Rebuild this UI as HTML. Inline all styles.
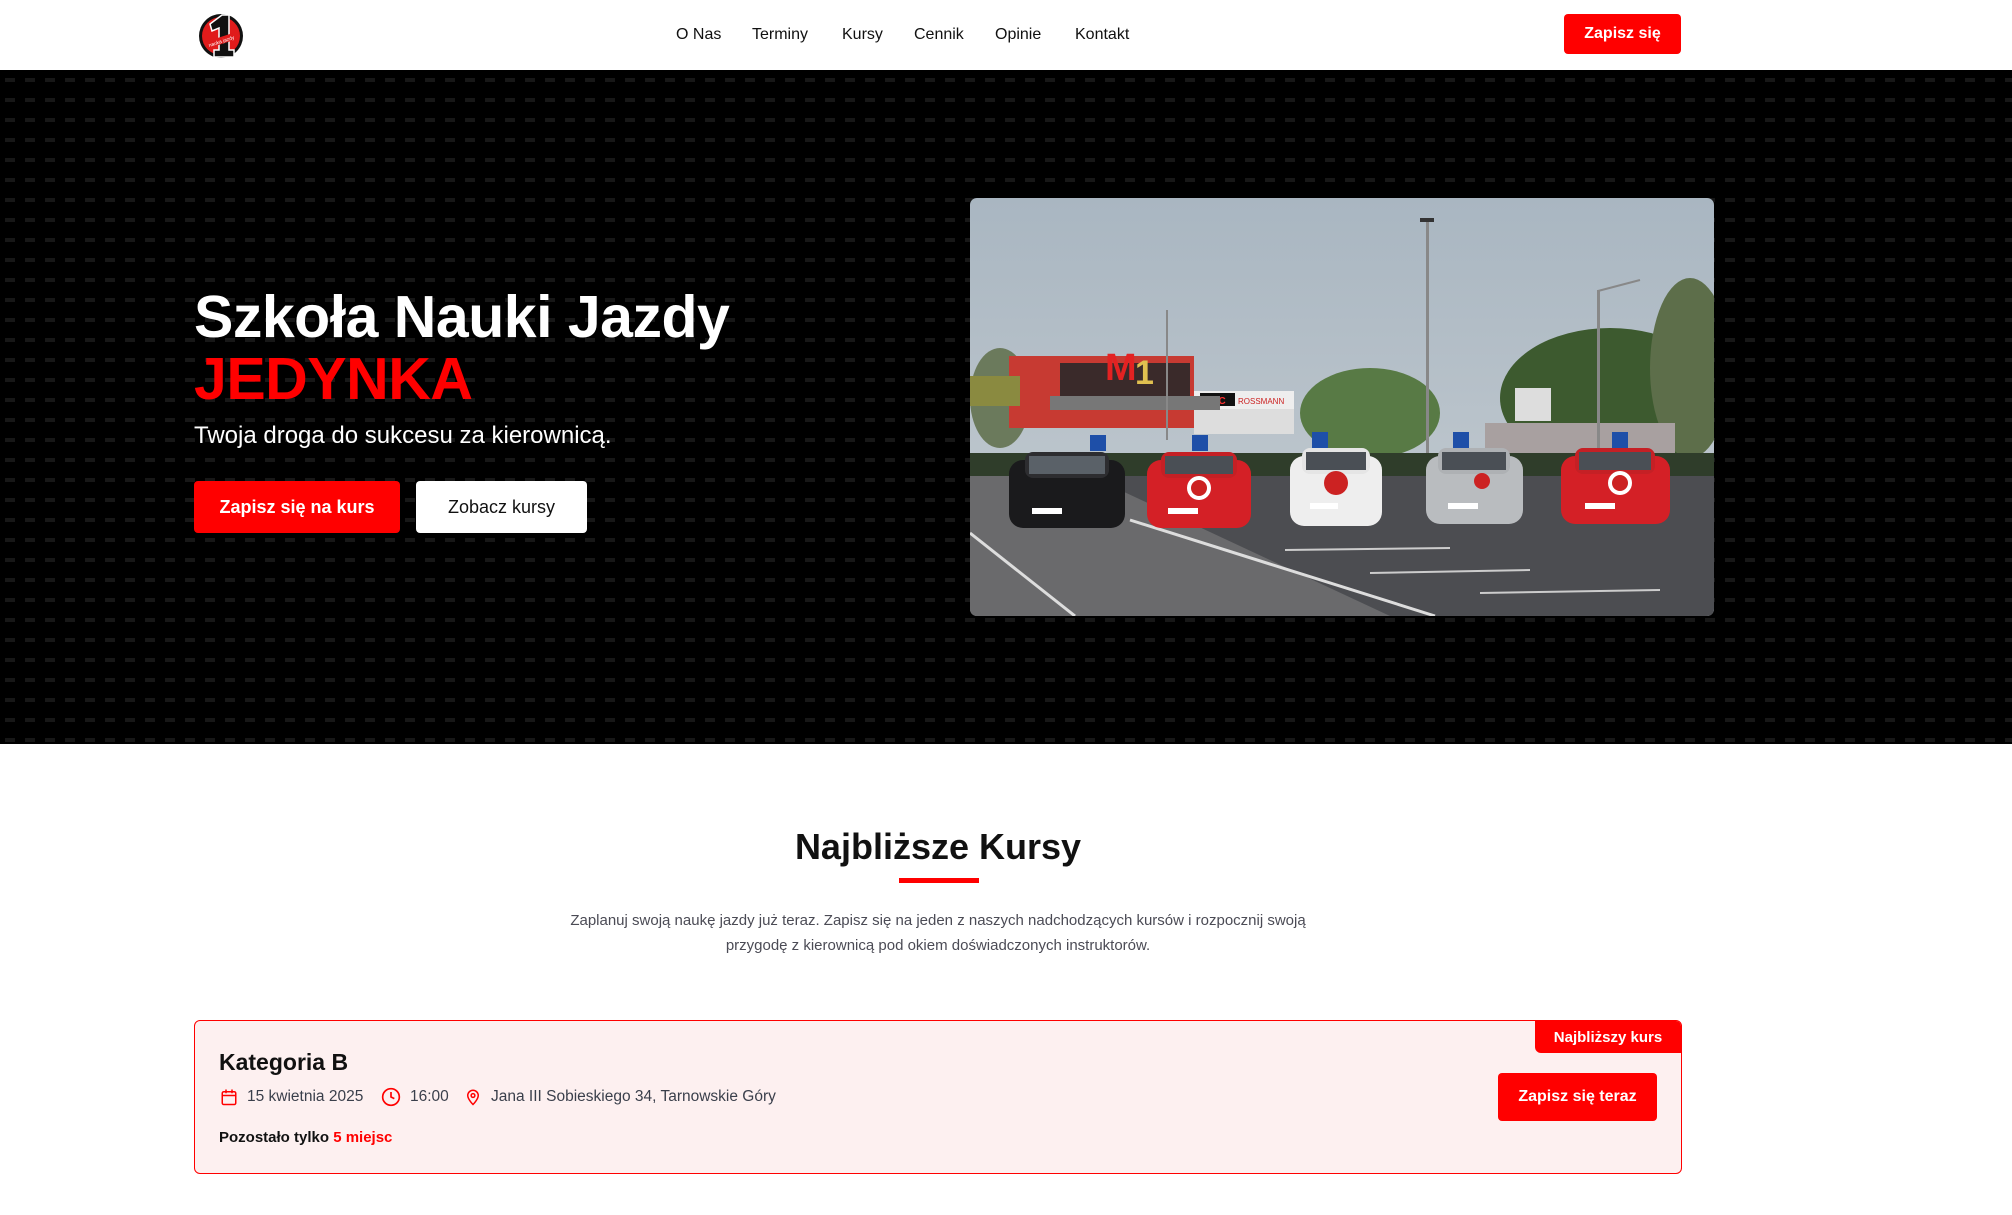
<!DOCTYPE html>
<html><head><meta charset="utf-8">
<style>
*{margin:0;padding:0;box-sizing:border-box}
body{width:2012px;height:1215px;overflow:hidden;background:#fff;font-family:"Liberation Sans","DejaVu Sans",sans-serif;color:#111;position:relative}
.abs{position:absolute}
header{position:absolute;left:0;top:0;width:2012px;height:70px;background:#fff}
.nav a{position:absolute;top:26px;font-size:16px;color:#111;text-decoration:none;white-space:nowrap}
.btn{position:absolute;display:flex;align-items:center;justify-content:center;font-weight:bold;border-radius:4px;white-space:nowrap}
</style></head><body>
<header>
  <svg class="abs" style="left:196px;top:10px" width="50" height="50" viewBox="0 0 50 50">
    <ellipse cx="25" cy="26" rx="22" ry="22" fill="#111"/>
    <ellipse cx="25" cy="26" rx="19" ry="19" fill="#e01b1b"/>
    <path d="M14 14 L26 5 L33 5 L33 40 L38 40 L38 47 L18 47 L18 40 L23 40 L23 18 L16 21 Z" fill="#111" stroke="#fff" stroke-width="1.5"/>
    <rect x="9" y="27" width="32" height="7" fill="#e01b1b" transform="rotate(-18 25 30)"/>
    <text x="25" y="33" font-size="5" fill="#fff" text-anchor="middle" transform="rotate(-18 25 30)">nauka jazdy</text>
  </svg>
  <div class="nav">
    <a style="left:676px">O Nas</a>
    <a style="left:752px">Terminy</a>
    <a style="left:842px">Kursy</a>
    <a style="left:914px">Cennik</a>
    <a style="left:995px">Opinie</a>
    <a style="left:1075px">Kontakt</a>
  </div>
  <div class="btn" style="left:1564px;top:14px;width:117px;height:40px;background:#ff0000;color:#fff;font-size:16px">Zapisz się</div>
</header>
<svg class="abs" style="left:0;top:70px" width="2012" height="674">
  <defs><pattern id="p" width="20" height="20" patternUnits="userSpaceOnUse"><rect x="5" y="8" width="10" height="4" fill="#171717"/></pattern></defs>
  <rect width="2012" height="674" fill="#000"/>
  <rect width="2012" height="674" fill="url(#p)"/>
</svg>
<div class="abs" style="left:194px;top:286px;font-size:59px;font-weight:bold;color:#fff;line-height:62px;letter-spacing:-0.5px">Szkoła Nauki Jazdy<br><span style="color:#ff0000">JEDYNKA</span></div>
<div class="abs" style="left:194px;top:422px;font-size:24px;color:#fff">Twoja droga do sukcesu za kierownicą.</div>
<div class="btn" style="left:194px;top:481px;width:206px;height:52px;background:#ff0000;color:#fff;font-size:18px">Zapisz się na kurs</div>
<div class="btn" style="left:416px;top:481px;width:171px;height:52px;background:#fff;color:#111;font-size:18px;font-weight:normal">Zobacz kursy</div>

<svg class="abs" style="left:970px;top:198px;border-radius:7px" width="744" height="418" viewBox="0 0 744 418">
  <defs><linearGradient id="sky" x1="0" y1="0" x2="0" y2="1"><stop offset="0" stop-color="#a9b6c1"/><stop offset="1" stop-color="#c6cdd2"/></linearGradient></defs>
  <rect width="744" height="418" fill="url(#sky)"/>
  <ellipse cx="640" cy="200" rx="110" ry="70" fill="#3d5a2f"/>
  <ellipse cx="720" cy="170" rx="40" ry="90" fill="#5d6e4a"/>
  <ellipse cx="400" cy="215" rx="70" ry="45" fill="#587a45"/>
  <ellipse cx="30" cy="200" rx="30" ry="50" fill="#6b7a5c"/>
  <rect x="39" y="158" width="185" height="72" fill="#c73a32"/>
  <rect x="90" y="165" width="130" height="45" fill="#3a2a2a"/>
  <text x="135" y="182" font-size="38" font-weight="bold" fill="#e32222" font-family="Liberation Sans">M</text>
  <text x="165" y="186" font-size="34" font-weight="bold" fill="#e0c050" font-family="Liberation Sans">1</text>
  <rect x="0" y="178" width="50" height="30" fill="#8a8a40"/>
  <rect x="224" y="193" width="100" height="18" fill="#eee"/>
  <rect x="230" y="195" width="35" height="13" fill="#111"/>
  <text x="234" y="206" font-size="10" font-weight="bold" fill="#ff3030" font-family="Liberation Sans">CCC</text>
  <text x="268" y="206" font-size="8" fill="#c22" font-family="Liberation Sans">ROSSMANN</text>
  <rect x="224" y="211" width="100" height="25" fill="#ddd"/>
  <rect x="80" y="198" width="170" height="14" fill="#777"/>
  <rect x="515" y="225" width="190" height="45" fill="#a8a0a0"/>
  <rect x="545" y="190" width="36" height="33" fill="#ddd"/>
  <rect x="456" y="22" width="3" height="235" fill="#888"/>
  <rect x="450" y="20" width="14" height="4" fill="#333"/>
  <rect x="196" y="112" width="2" height="130" fill="#888"/>
  <rect x="627" y="92" width="3" height="160" fill="#888"/>
  <line x1="628" y1="93" x2="670" y2="82" stroke="#888" stroke-width="2"/>
  <rect x="0" y="255" width="744" height="30" fill="#2f3d2a"/>
  <rect x="0" y="278" width="744" height="140" fill="#4c4d51"/>
  <polygon points="0,278 120,278 420,418 0,418" fill="#6a6a6c"/>
  <line x1="0" y1="335" x2="105" y2="418" stroke="#ddd" stroke-width="3"/>
  <line x1="160" y1="322" x2="465" y2="418" stroke="#ddd" stroke-width="3"/>
  <line x1="315" y1="352" x2="480" y2="350" stroke="#ccc" stroke-width="2"/>
  <line x1="400" y1="375" x2="560" y2="372" stroke="#ccc" stroke-width="2"/>
  <line x1="510" y1="395" x2="690" y2="392" stroke="#ccc" stroke-width="2"/>
  <g>
    <rect x="39" y="262" width="116" height="68" rx="14" fill="#1a1a1c"/>
    <rect x="55" y="254" width="84" height="26" rx="8" fill="#2d2d30"/>
    <rect x="59" y="258" width="76" height="18" fill="#5a6168"/>
    <rect x="177" y="262" width="104" height="68" rx="14" fill="#d42026"/>
    <rect x="191" y="254" width="76" height="26" rx="8" fill="#c52025"/>
    <rect x="195" y="258" width="68" height="18" fill="#4a4f55"/>
    <circle cx="229" cy="290" r="12" fill="#fff"/><circle cx="229" cy="290" r="8" fill="#c22"/>
    <rect x="320" y="258" width="92" height="70" rx="14" fill="#eeeeee"/>
    <rect x="332" y="250" width="68" height="26" rx="8" fill="#e5e5e5"/>
    <rect x="336" y="254" width="60" height="18" fill="#4a4f55"/>
    <circle cx="366" cy="285" r="12" fill="#c22"/>
    <rect x="456" y="258" width="97" height="68" rx="14" fill="#b9bcbf"/>
    <rect x="468" y="250" width="72" height="26" rx="8" fill="#aeb1b4"/>
    <rect x="472" y="254" width="64" height="18" fill="#4a4f55"/>
    <circle cx="512" cy="283" r="8" fill="#c22"/>
    <rect x="591" y="258" width="109" height="68" rx="14" fill="#d42026"/>
    <rect x="605" y="250" width="80" height="26" rx="8" fill="#c52025"/>
    <rect x="609" y="254" width="72" height="18" fill="#4a4f55"/>
    <circle cx="650" cy="285" r="12" fill="#fff"/><circle cx="650" cy="285" r="8" fill="#c22"/>
    <g fill="#1e4fa8"><rect x="120" y="237" width="16" height="16"/><rect x="222" y="237" width="16" height="16"/><rect x="342" y="234" width="16" height="16"/><rect x="483" y="234" width="16" height="16"/><rect x="642" y="234" width="16" height="16"/></g>
    <g fill="#fff"><rect x="62" y="310" width="30" height="6"/><rect x="198" y="310" width="30" height="6"/><rect x="340" y="305" width="28" height="6"/><rect x="478" y="305" width="30" height="6"/><rect x="615" y="305" width="30" height="6"/></g>
  </g>
</svg>

<div class="abs" style="left:0;top:826px;width:1876px;text-align:center;font-size:36px;font-weight:bold;color:#111">Najbliższe Kursy</div>
<div class="abs" style="left:899px;top:878px;width:80px;height:5px;background:#ff0000"></div>
<div class="abs" style="left:0;top:908px;width:1876px;text-align:center;font-size:15px;line-height:25px;color:#4b4b55">Zaplanuj swoją naukę jazdy już teraz. Zapisz się na jeden z naszych nadchodzących kursów i rozpocznij swoją<br>przygodę z kierownicą pod okiem doświadczonych instruktorów.</div>

<div class="abs" style="left:194px;top:1020px;width:1488px;height:154px;background:#fdf0f0;border:1.5px solid #ff0000;border-radius:6px;overflow:hidden">
  <div class="abs" style="right:0;top:0;width:146px;height:32px;background:#ff0000;color:#fff;font-weight:bold;font-size:15px;display:flex;align-items:center;justify-content:center;border-bottom-left-radius:6px">Najbliższy kurs</div>
</div>
<div class="abs" style="left:219px;top:1049px;font-size:23px;font-weight:bold;color:#111">Kategoria B</div>
<svg class="abs" style="left:220px;top:1088px" width="18" height="18" viewBox="0 0 24 24" fill="none" stroke="#f00" stroke-width="2"><rect x="3" y="5" width="18" height="17" rx="2"/><path d="M3 10h18M8 2v5M16 2v5"/></svg>
<div class="abs" style="left:247px;top:1088px;font-size:15.5px;color:#3a3f4b">15 kwietnia 2025</div>
<svg class="abs" style="left:381px;top:1087px" width="20" height="20" viewBox="0 0 24 24" fill="none" stroke="#f00" stroke-width="2"><circle cx="12" cy="12" r="10"/><path d="M12 6v6l4 2"/></svg>
<div class="abs" style="left:410px;top:1088px;font-size:15.5px;color:#3a3f4b">16:00</div>
<svg class="abs" style="left:464px;top:1087px" width="18" height="20" viewBox="0 0 24 24" fill="none" stroke="#f00" stroke-width="2"><path d="M12 22s-7-7-7-12a7 7 0 0 1 14 0c0 5-7 12-7 12z"/><circle cx="12" cy="10" r="2.5"/></svg>
<div class="abs" style="left:491px;top:1088px;font-size:15.5px;color:#3a3f4b">Jana III Sobieskiego 34, Tarnowskie Góry</div>
<div class="abs" style="left:219px;top:1129px;font-size:15px;font-weight:bold;color:#111">Pozostało tylko <span style="color:#f00">5 miejsc</span></div>
<div class="btn" style="left:1498px;top:1073px;width:159px;height:48px;background:#ff0000;color:#fff;font-size:16px">Zapisz się teraz</div>
</body></html>
